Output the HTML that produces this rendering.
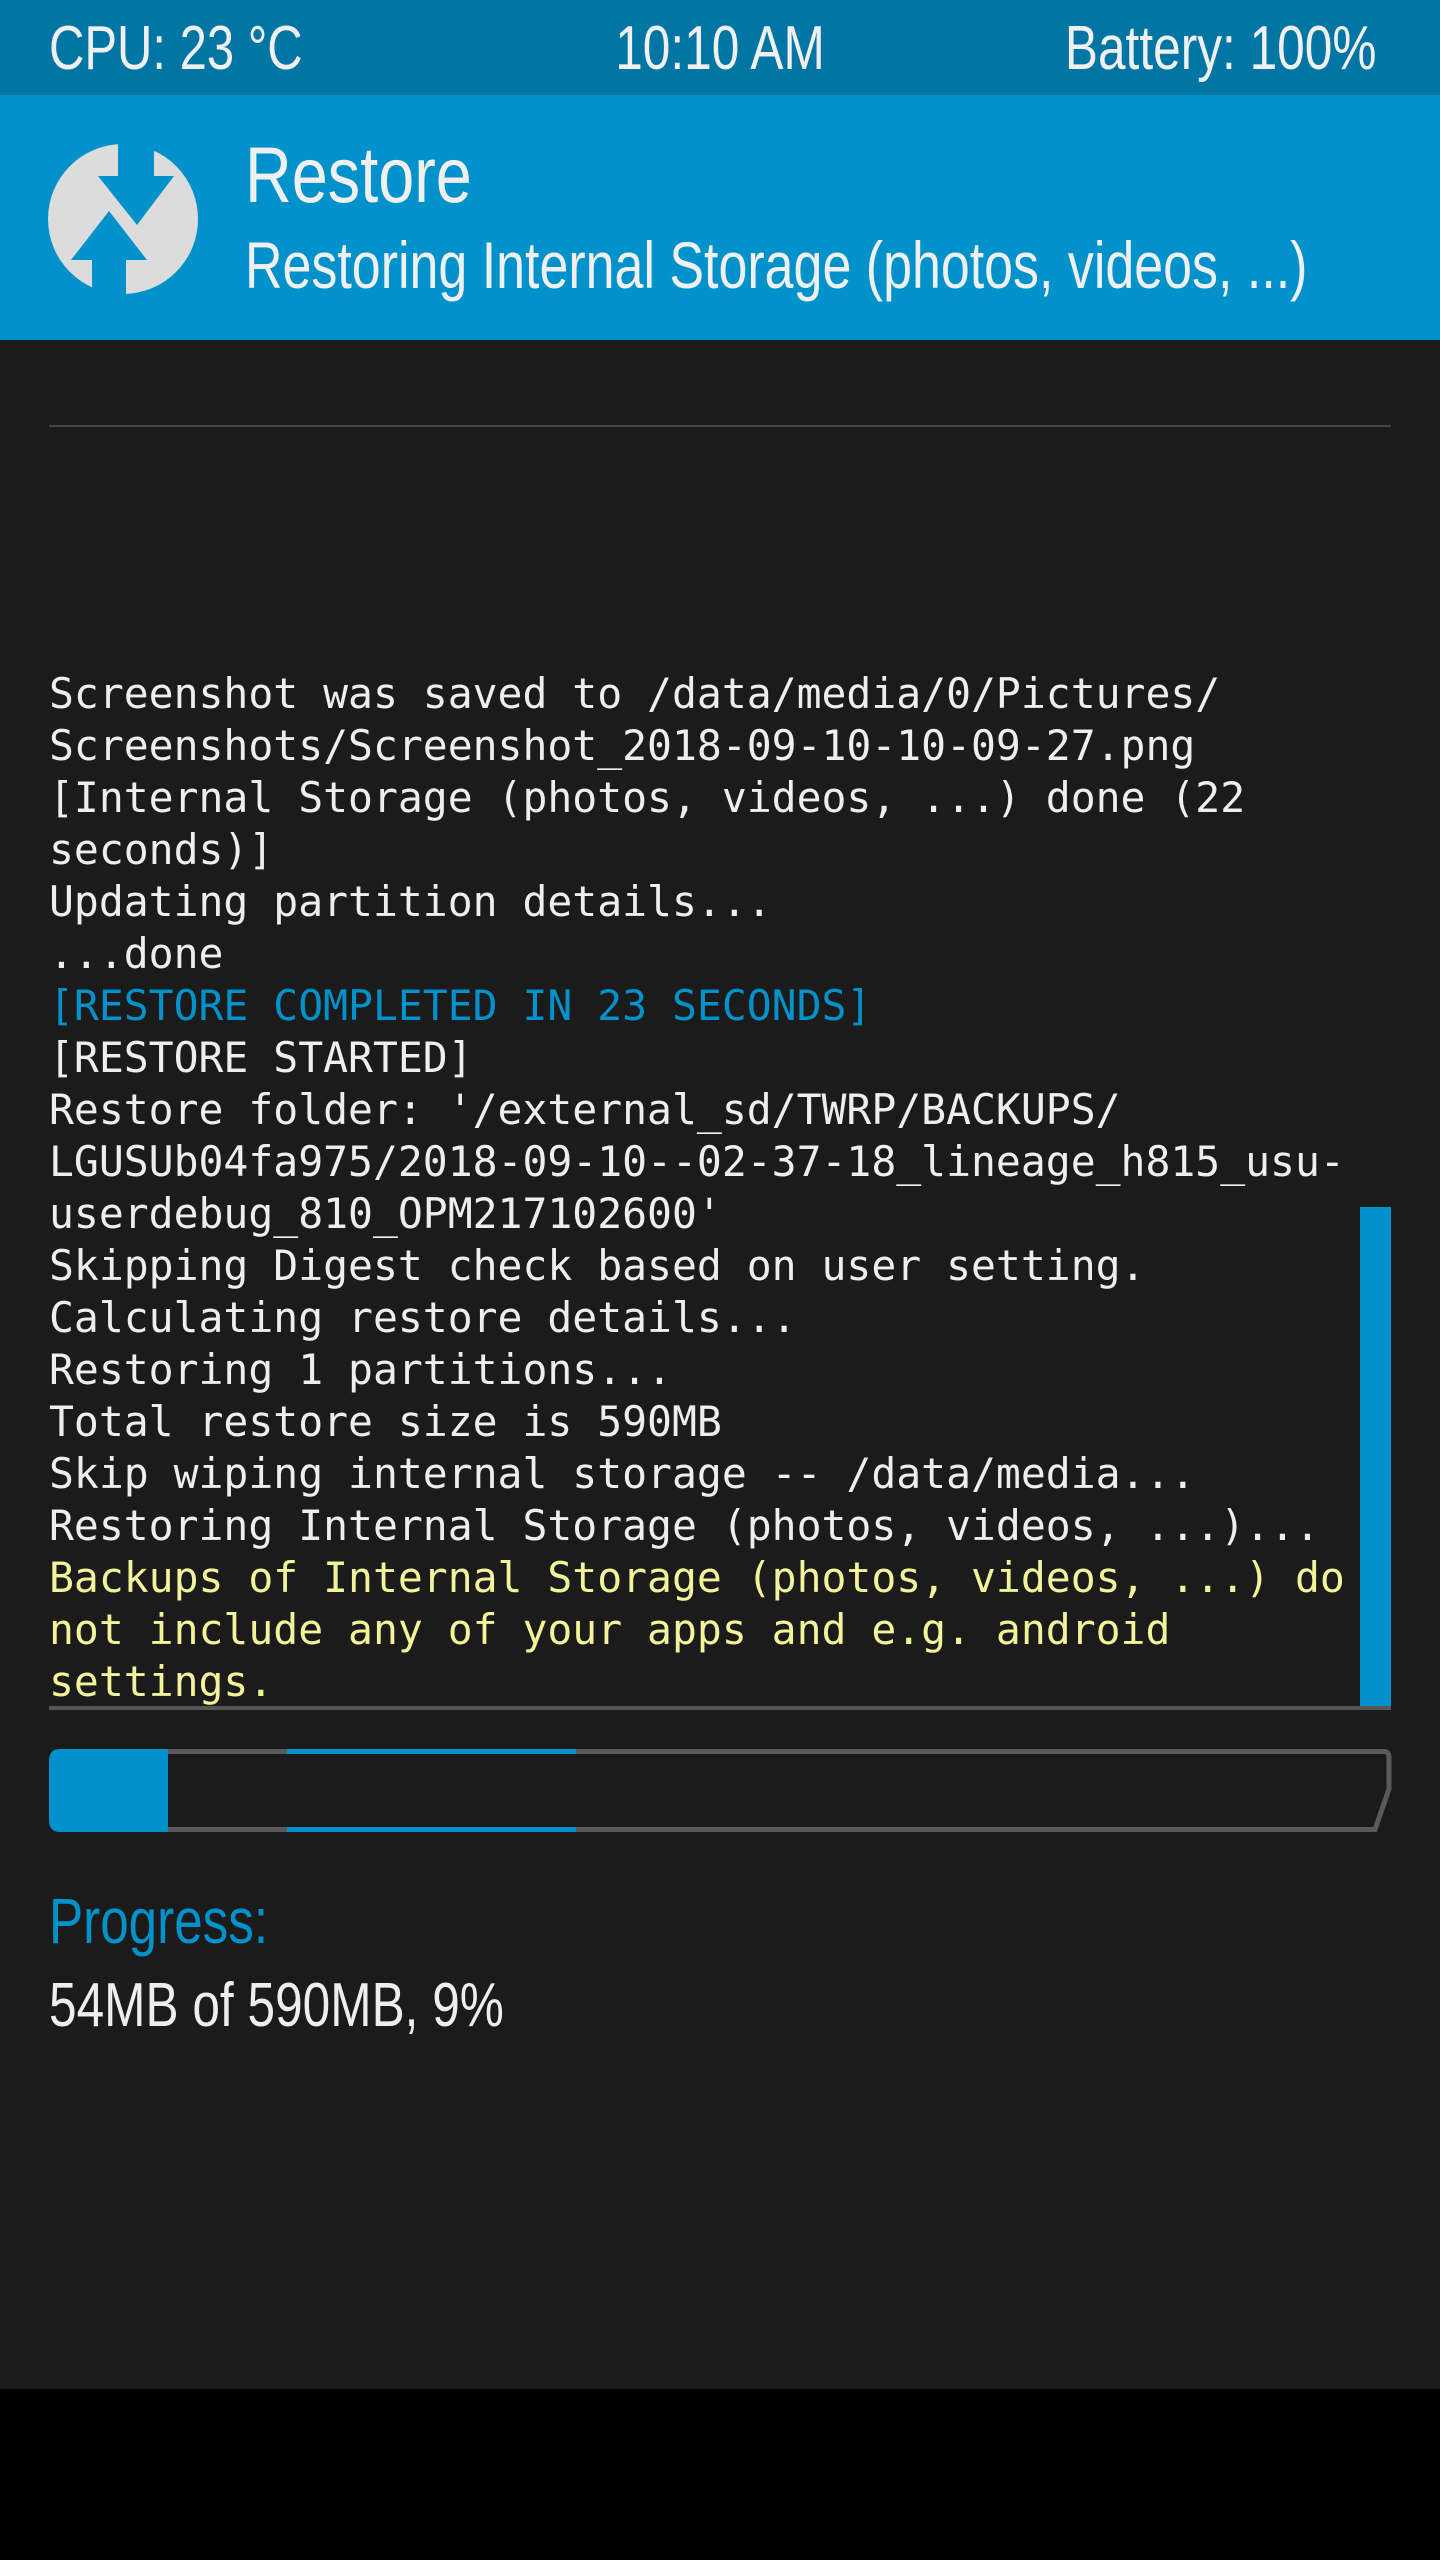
<!DOCTYPE html>
<html><head><meta charset="utf-8"><style>
html,body{margin:0;padding:0;width:1440px;height:2560px;background:#1b1b1b;overflow:hidden;position:relative;font-family:"Liberation Sans",sans-serif;}
.abs{position:absolute;white-space:nowrap;}
.n{display:inline-block;transform:scaleX(0.8);transform-origin:left center;}
.nr{display:inline-block;transform:scaleX(0.8);transform-origin:right center;}
.nc{display:inline-block;transform:scaleX(0.8);transform-origin:center center;}
#status{position:absolute;left:0;top:0;width:1440px;height:95px;background:#0175a4;color:#f0f0f0;font-size:62px;}
#hdr{position:absolute;left:0;top:95px;width:1440px;height:245px;background:#0192cb;color:#f0f0f0;}
#console{position:absolute;left:49px;top:668px;width:1320px;font-family:"DejaVu Sans Mono","Liberation Mono",monospace;font-size:41.4px;line-height:52px;color:#eeeeee;white-space:pre;}
.b{color:#0192cb}.y{color:#f3f39a}
</style></head><body>
<div id="status">
  <div class="abs" style="left:49px;top:13px;"><span class="n" style="transform:scaleX(0.79)">CPU: 23 °C</span></div>
  <div class="abs" style="left:520px;width:400px;text-align:center;top:13px;"><span class="nc">10:10 AM</span></div>
  <div class="abs" style="right:64px;top:13px;"><span class="nr">Battery: 100%</span></div>
</div>
<div id="hdr">
  <svg class="abs" style="left:0;top:0" width="260" height="245" viewBox="0 95 260 245">
    <circle cx="123" cy="219" r="75" fill="#dcdcdc"/>
    <polygon points="118,140 154,140 154,176 174,176 137,225 98,176 118,176" fill="#0192cb"/>
    <polygon points="109,211 147,260 126,260 126,300 92,300 92,260 71,260" fill="#0192cb"/>
  </svg>
  <div class="abs" style="left:245px;top:34px;font-size:79px;"><span class="n" style="transform:scaleX(0.82)">Restore</span></div>
  <div class="abs" style="left:245px;top:132px;font-size:66px;"><span class="n" style="transform:scaleX(0.787)">Restoring Internal Storage (photos, videos, ...)</span></div>
</div>
<div class="abs" style="left:49px;top:425px;width:1342px;height:2px;background:#444;"></div>
<div id="console">Screenshot was saved to /data/media/0/Pictures/
Screenshots/Screenshot_2018-09-10-10-09-27.png
[Internal Storage (photos, videos, ...) done (22
seconds)]
Updating partition details...
...done
<span class="b">[RESTORE COMPLETED IN 23 SECONDS]</span>
[RESTORE STARTED]
Restore folder: '/external_sd/TWRP/BACKUPS/
LGUSUb04fa975/2018-09-10--02-37-18_lineage_h815_usu-
userdebug_810_OPM217102600'
Skipping Digest check based on user setting.
Calculating restore details...
Restoring 1 partitions...
Total restore size is 590MB
Skip wiping internal storage -- /data/media...
Restoring Internal Storage (photos, videos, ...)...
<span class="y">Backups of Internal Storage (photos, videos, ...) do
not include any of your apps and e.g. android
settings.</span></div>
<div class="abs" style="left:1360px;top:1207px;width:31px;height:499px;background:#0192cb;"></div>
<div class="abs" style="left:49px;top:1706px;width:1342px;height:4px;background:#555;"></div>
<svg class="abs" style="left:0;top:1740px" width="1440" height="100">
  <path d="M60,11.5 H1384 Q1389,11.5 1389,18 V49 L1375,89.5 H60" fill="none" stroke="#5a5a5a" stroke-width="5"/>
  <path d="M60,9 H168 V92 H60 Q49,92 49,80 V21 Q49,9 60,9 Z" fill="#0192cb"/>
  <rect x="287" y="9" width="289" height="5" fill="#0192cb"/>
  <rect x="287" y="87" width="289" height="5" fill="#0192cb"/>
</svg>
<div class="abs" style="left:49px;top:1884px;font-size:64px;color:#0192cb;"><span class="n">Progress:</span></div>
<div class="abs" style="left:49px;top:1970px;font-size:62px;color:#eeeeee;"><span class="n">54MB of 590MB, 9%</span></div>
<div class="abs" style="left:0;top:2389px;width:1440px;height:171px;background:#000;"></div>
</body></html>
